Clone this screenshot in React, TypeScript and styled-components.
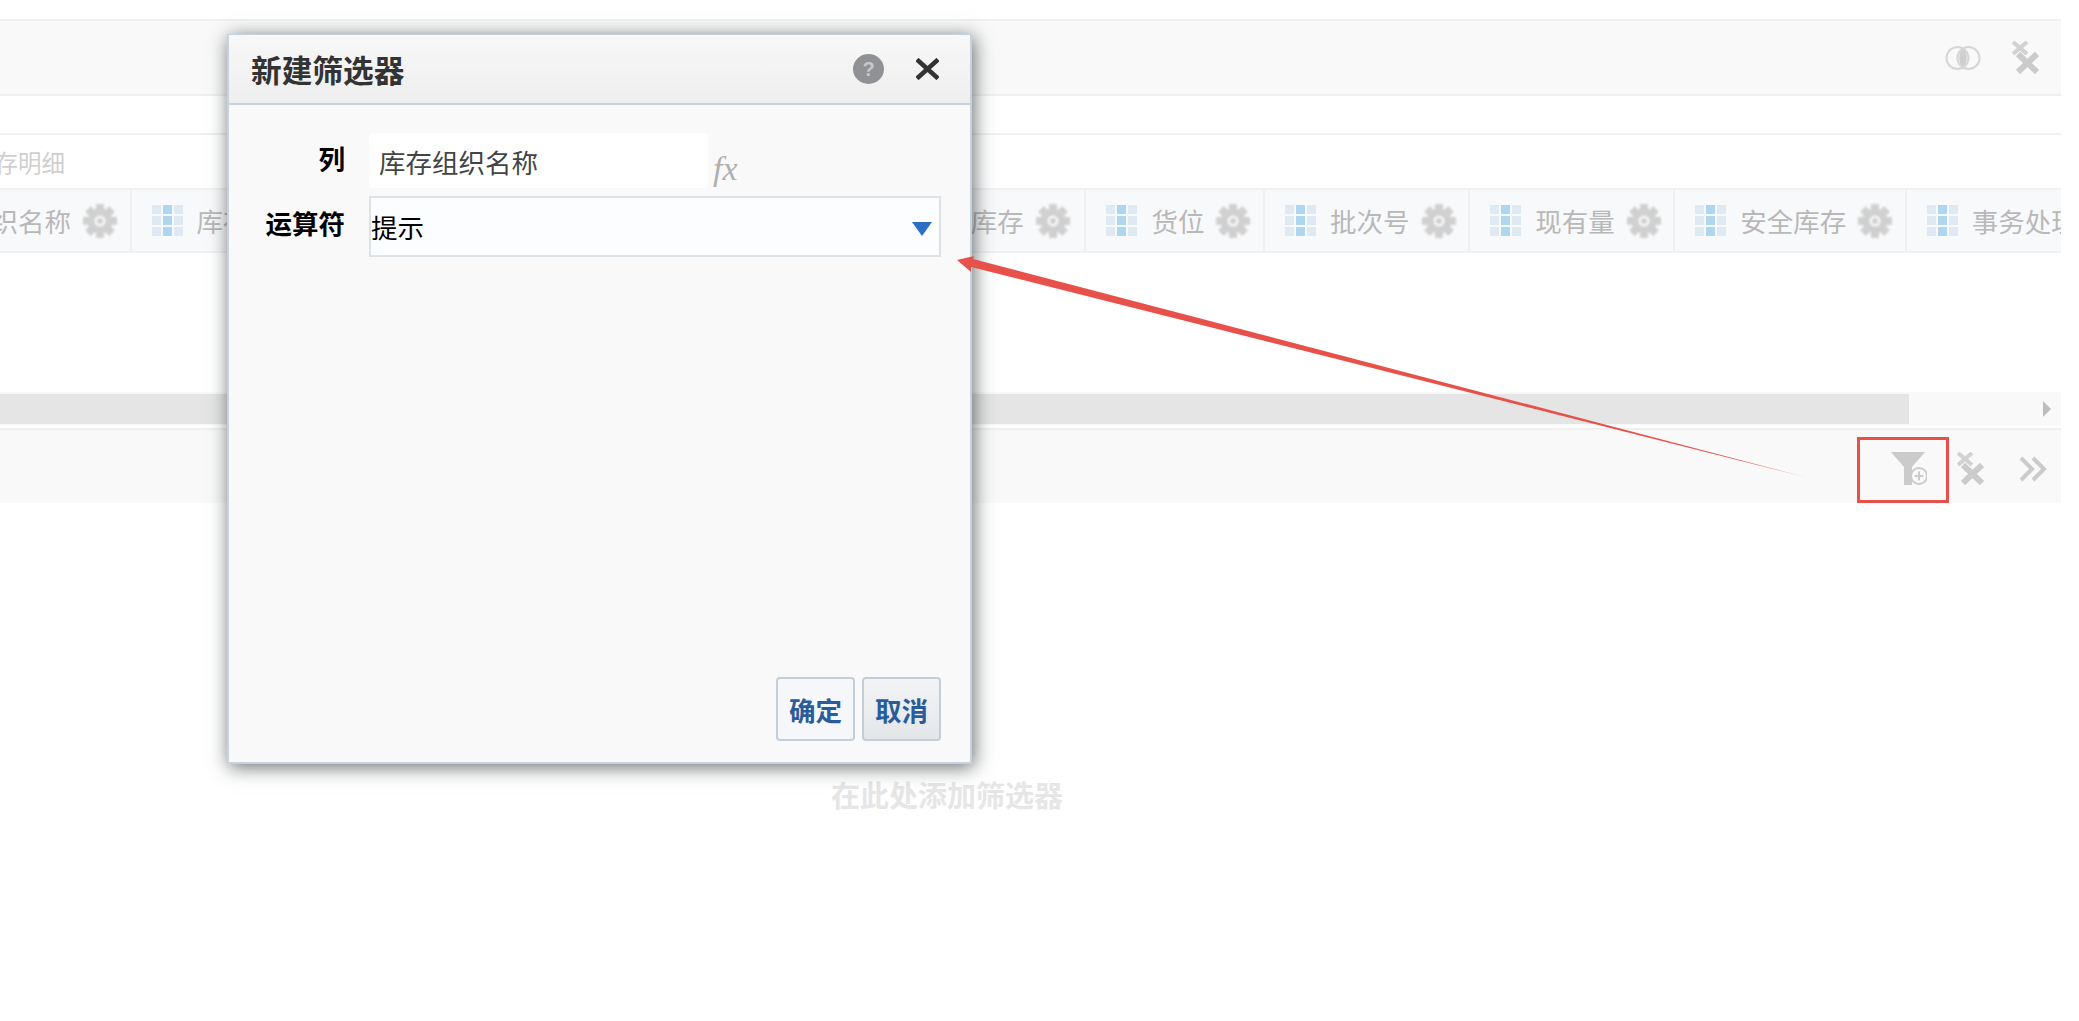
import styled, { createGlobalStyle } from 'styled-components'

const GlobalStyle = createGlobalStyle`
  html, body {
    margin: 0;
    padding: 0;
    background: #fff;
    overflow: hidden;
  }
  body {
    font-family: "Noto Sans CJK SC", "Liberation Sans", sans-serif;
  }
`

const Page = styled.div`
  position: relative;
  width: 2079px;
  height: 1021px;
  overflow: hidden;
  background: #fff;
  padding-top: 19px;
  box-sizing: border-box;
`

const Column = styled.div`
  width: 2061px;
  display: flex;
  flex-direction: column;
`

const Bar = styled.div<{ $height: number; $closed?: boolean; $pt?: number }>`
  height: ${p => p.$height}px;
  box-sizing: border-box;
  background: #f9f9f9;
  border-top: 2px solid #f0f0f0;
  border-bottom: ${p => (p.$closed ? '2px solid #f0f0f0' : 'none')};
  padding-top: ${p => p.$pt ?? 0}px;
  display: flex;
  align-items: center;
  justify-content: flex-end;
`

const Spacer = styled.div<{ $height: number }>`
  height: ${p => p.$height}px;
  background: #fff;
`

const TableTitle = styled.div`
  height: 55px;
  box-sizing: border-box;
  border-top: 2px solid #f0f0f0;
  margin-left: -29px;
  padding-top: 12px;
  font-size: 23.5px;
  line-height: 30px;
  color: #cfcfcf;
`

const HeaderRow = styled.div`
  height: 65px;
  box-sizing: border-box;
  display: flex;
  overflow: hidden;
  border-top: 2px solid #f0f1f3;
  border-bottom: 2px solid #f0f1f3;
  background: #f8f9fb;
`

const HeaderCell = styled.div<{ $first?: boolean; $wide?: boolean }>`
  flex: none;
  display: flex;
  align-items: center;
  box-sizing: border-box;
  height: 100%;
  padding: 0 ${p => (p.$wide ? '14.6px' : '12.6px')} 0 20px;
  border-right: 2px solid #eef0f3;
  margin-left: ${p => (p.$first ? '-153px' : '0')};
`

const HeaderText = styled.span`
  margin: 0 12px 0 14px;
  font-size: 26.5px;
  line-height: 34px;
  white-space: nowrap;
  color: #b8b8b8;
`

const ScrollTrack = styled.div`
  height: 33px;
  background: #f9f9f9;
  display: flex;
  align-items: center;
  justify-content: space-between;
  padding-right: 10px;
`

const ScrollThumb = styled.div`
  width: 1909px;
  height: 30px;
  background: #e5e5e5;
`

const ScrollArrow = styled.div`
  width: 0;
  height: 0;
  border-left: 8px solid #bdbdbd;
  border-top: 8px solid transparent;
  border-bottom: 8px solid transparent;
`

const IconSlot = styled.div<{ $width: number; $mr?: number; $ml?: number }>`
  width: ${p => p.$width}px;
  margin-right: ${p => p.$mr ?? 0}px;
  margin-left: ${p => p.$ml ?? 0}px;
  display: flex;
  justify-content: center;
  flex: none;
`

const DropHint = styled.div`
  margin: 274px 0 0 831px;
  font-size: 29px;
  line-height: 34px;
  font-weight: 700;
  color: #e6e6e6;
`

const Dialog = styled.div`
  position: absolute;
  left: 227px;
  top: 34px;
  width: 745px;
  height: 730px;
  box-sizing: border-box;
  display: flex;
  flex-direction: column;
  background: #f9f9fa;
  border: 2px solid #c6d3df;
  border-top-width: 1px;
  box-shadow: 2px 3px 18px rgba(40, 45, 50, 0.7);
`

const DialogHeader = styled.div`
  height: 70px;
  flex: none;
  box-sizing: border-box;
  display: flex;
  align-items: center;
  padding: 0 31px 0 22px;
  background: linear-gradient(#f8f8f8, #eeeeee);
  border-bottom: 2px solid #c3d2e0;
`

const DialogTitle = styled.div`
  flex: 1;
  font-size: 30.7px;
  line-height: 40px;
  font-weight: 700;
  color: #333;
`

const DialogBody = styled.div`
  flex: 1;
  padding: 28px 28px 0 0;
  display: flex;
  flex-direction: column;
`

const FormRow = styled.div<{ $mb: number }>`
  display: flex;
  margin-bottom: ${p => p.$mb}px;
`

const FormLabel = styled.div<{ $pt: number }>`
  width: 116px;
  flex: none;
  padding-top: ${p => p.$pt}px;
  text-align: right;
  font-size: 26.5px;
  line-height: 34px;
  font-weight: 700;
  color: #000;
`

const ColumnValue = styled.div`
  width: 339px;
  height: 55px;
  margin-left: 24px;
  padding-left: 10px;
  box-sizing: border-box;
  background: #fff;
  border-radius: 4px;
  font-size: 26.5px;
  line-height: 58px;
  color: #444;
`

const FxMark = styled.div`
  margin: 17px 0 0 5px;
  font-family: "Liberation Serif", serif;
  font-style: italic;
  font-size: 34px;
  line-height: 38px;
  color: #b0b0b0;
`

const SelectBox = styled.div`
  width: 572px;
  height: 61px;
  margin-left: 24px;
  padding: 0 7px 0 0;
  box-sizing: border-box;
  display: flex;
  align-items: center;
  justify-content: space-between;
  background: #fcfdff;
  border: 2px solid #dde2e7;
  font-size: 26.5px;
  color: #000;
`

const SelectText = styled.span`
  padding-bottom: 1px;
`

const SelectCaret = styled.div`
  width: 0;
  height: 0;
  margin-top: 5px;
  border-top: 14px solid #2d6fc4;
  border-left: 10px solid transparent;
  border-right: 10px solid transparent;
`

const DialogFooter = styled.div`
  margin-top: auto;
  padding: 0 1px 21px 0;
  display: flex;
  justify-content: flex-end;
  gap: 7px;
`

const FooterButton = styled.div<{ $pressed?: boolean }>`
  width: 79px;
  height: 64px;
  box-sizing: border-box;
  display: flex;
  align-items: center;
  justify-content: center;
  border: 2px solid #c3ced9;
  border-radius: 4px;
  background: ${p => (p.$pressed ? 'linear-gradient(#f2f3f5, #e4e7ea)' : '#f5f7fa')};
  font-size: 26.5px;
  font-weight: 700;
  color: #2a5c9b;
`

const AnnotationBox = styled.div`
  position: absolute;
  left: 1857px;
  top: 437px;
  width: 92px;
  height: 66px;
  box-sizing: border-box;
  border: 3px solid #e8504a;
`

const AnnotationArrow = styled.svg`
  position: absolute;
  left: 0;
  top: 0;
`

const SoftSvg = styled.svg<{ $blur?: number }>`
  filter: blur(${p => p.$blur ?? 0.5}px);
`

const ColumnIcon = () => (
  <SoftSvg width="31" height="31" viewBox="0 0 31 31">
    {[0, 1, 2].flatMap(r =>
      [0, 1, 2].map(c => (
        <rect
          key={`${r}-${c}`}
          x={c * 11}
          y={r * 11}
          width="9"
          height="9"
          fill={c === 1 ? '#aed6ee' : '#dfe9f3'}
        />
      )),
    )}
  </SoftSvg>
)

const teeth = [0, 45, 90, 135, 180, 225, 270, 315]

const GearIcon = () => (
  <SoftSvg $blur={0.8} width="34" height="34" viewBox="0 0 34 34">
    {teeth.map(a => (
      <rect key={a} x="13" y="0" width="8" height="8" rx="1" fill="#d0d0d0" transform={`rotate(${a} 17 17)`} />
    ))}
    <circle cx="17" cy="17" r="9" fill="none" stroke="#d0d0d0" strokeWidth="7" />
    <circle cx="17" cy="17" r="3" fill="#d0d0d0" />
  </SoftSvg>
)

const CrossPair = () => (
  <SoftSvg width="27" height="33" viewBox="0 0 27 33">
    <path d="M1 1 L15 13 M15 1 L1 13" stroke="#d2d2d2" strokeWidth="4" />
    <path d="M6 13 L25 31 M25 13 L6 31" stroke="#cbcbcb" strokeWidth="6" />
  </SoftSvg>
)

const VennIcon = () => (
  <SoftSvg width="36" height="26" viewBox="0 0 36 26">
    <path d="M18 3 C23 7 23 19 18 23 C13 19 13 7 18 3 Z" fill="#cfcfcf" />
    <circle cx="12.5" cy="13" r="11" fill="none" stroke="#d6d6d6" strokeWidth="2" />
    <circle cx="23.5" cy="13" r="11" fill="none" stroke="#d6d6d6" strokeWidth="2" />
  </SoftSvg>
)

const FilterAddIcon = () => (
  <svg width="36" height="34" viewBox="0 0 36 34">
    <path d="M0 0 H34 L21 15 V33 H13 V15 Z" fill="#cbcbcb" />
    <circle cx="28" cy="24" r="8" fill="#f9f9f9" stroke="#cbcbcb" strokeWidth="2" />
    <path d="M23.5 24 H32.5 M28 19.5 V28.5" stroke="#cbcbcb" strokeWidth="2" />
  </svg>
)

const ChevronsIcon = () => (
  <SoftSvg width="28" height="26" viewBox="0 0 28 26">
    <path d="M2 2 L13 13 L2 24 M14 2 L25 13 L14 24" fill="none" stroke="#cbcbcb" strokeWidth="4" />
  </SoftSvg>
)

const HelpIcon = () => (
  <svg width="31" height="30" viewBox="0 0 31 30">
    <ellipse cx="15.5" cy="15" rx="15.5" ry="15" fill="#8f9194" />
    <text x="15.5" y="22" textAnchor="middle" fontSize="20" fontWeight="700" fill="#c8c8c8" fontFamily="Liberation Sans, sans-serif">?</text>
  </svg>
)

const CloseIcon = () => (
  <svg width="23" height="22" viewBox="0 0 23 22">
    <path d="M1 1.5 L22 20.5 M22 1.5 L1 20.5" stroke="#333" strokeWidth="4.5" />
  </svg>
)

const columns = [
  '库存组织名称',
  '库存组织代码',
  '物料编码',
  '物料名称',
  '子库存',
  '货位',
  '批次号',
  '现有量',
  '安全库存',
  '事务处理日期',
]

function App() {
  return (
    <Page>
      <GlobalStyle />
      <Column>
        <Bar $height={77} $closed>
          <IconSlot $width={36} $mr={31}><VennIcon /></IconSlot>
          <IconSlot $width={27} $mr={22}><CrossPair /></IconSlot>
        </Bar>
        <Spacer $height={37} />
        <TableTitle>库存明细</TableTitle>
        <HeaderRow>
          {columns.map((name, i) => (
            <HeaderCell key={name} $first={i === 0} $wide={name === '子库存'}>
              <ColumnIcon />
              <HeaderText>{name}</HeaderText>
              <GearIcon />
            </HeaderCell>
          ))}
        </HeaderRow>
        <Spacer $height={139} />
        <ScrollTrack>
          <ScrollThumb />
          <ScrollArrow />
        </ScrollTrack>
        <Spacer $height={3} />
        <Bar $height={75} $pt={4}>
          <IconSlot $width={36} $mr={30}><FilterAddIcon /></IconSlot>
          <IconSlot $width={27} $mr={35}><CrossPair /></IconSlot>
          <IconSlot $width={28} $mr={14}><ChevronsIcon /></IconSlot>
        </Bar>
        <DropHint>在此处添加筛选器</DropHint>
      </Column>

      <AnnotationBox />

      <Dialog>
        <DialogHeader>
          <DialogTitle>新建筛选器</DialogTitle>
          <HelpIcon />
          <IconSlot $width={23} $ml={32}><CloseIcon /></IconSlot>
        </DialogHeader>
        <DialogBody>
          <FormRow $mb={8}>
            <FormLabel $pt={8}>列</FormLabel>
            <ColumnValue>库存组织名称</ColumnValue>
            <FxMark>fx</FxMark>
          </FormRow>
          <FormRow $mb={0}>
            <FormLabel $pt={10}>运算符</FormLabel>
            <SelectBox>
              <SelectText>提示</SelectText>
              <SelectCaret />
            </SelectBox>
          </FormRow>
          <DialogFooter>
            <FooterButton>确定</FooterButton>
            <FooterButton $pressed>取消</FooterButton>
          </DialogFooter>
        </DialogBody>
      </Dialog>

      <AnnotationArrow width="2079" height="1021" viewBox="0 0 2079 1021">
        <path d="M957 260 L974 256 L973 259 L1805 477 L971 267 L971 272 Z" fill="#e8504a" />
      </AnnotationArrow>
    </Page>
  )
}

export default App
